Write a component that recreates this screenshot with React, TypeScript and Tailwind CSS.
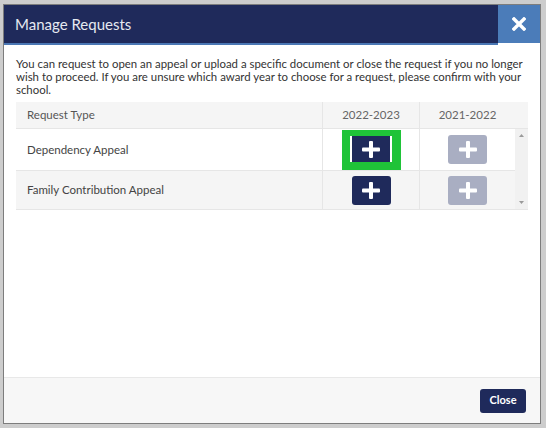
import React from "react";

const Plus = () => (
  <svg width="18" height="17" viewBox="0 0 18 17">
    <rect x="7" y="0" width="4" height="17" rx="1" fill="#fff" />
    <rect x="0" y="6.5" width="18" height="4" rx="1" fill="#fff" />
  </svg>
);

export default function App() {
  return (
    <div
      className="w-[546px] h-[428px] bg-[#cdcdcd] pt-[4px] pl-[3px] pr-[5px] pb-[4px]"
      style={{ fontFamily: "Lato, 'Open Sans', sans-serif" }}
    >
      <div className="h-full border border-[#7d7d7d] bg-white flex flex-col">
        {/* header */}
        <div className="h-[40px] flex">
          <div className="flex-1 bg-[#1f2a5b] border-b-2 border-[#4a77b4] pl-[11px] flex items-center text-[15px] text-[#e6e9f1]">
            Manage Requests
          </div>
          <div className="w-[42px] h-[38px] bg-[#4b7cb9] flex items-center justify-center">
            <svg width="14" height="14" viewBox="0 0 14 14">
              <path d="M2 2 L12 12 M12 2 L2 12" stroke="#fff" strokeWidth="3.4" strokeLinecap="square" />
            </svg>
          </div>
        </div>

        {/* body */}
        <div className="pl-[12px] pr-[10px] pt-[12px]">
          <p className="text-[11.4px] leading-[13px] text-[#333] mr-[-6px]">
            You can request to open an appeal or upload a specific document or close the request if you no longer wish to proceed. If you are unsure which award year to choose for a request, please confirm with your school.
          </p>

          <div className="mt-[6px] w-[512px] grid grid-cols-[307px_97px_95px_13px] text-[11.5px]">
            {/* header row */}
            <div className="h-[27px] bg-[#f5f5f5] border-r border-b border-[#e6e6e6] flex items-center pl-[11px] text-[#555]">
              Request Type
            </div>
            <div className="h-[27px] bg-[#f5f5f5] border-r border-b border-[#e6e6e6] flex items-center justify-center text-[#666]">
              2022-2023
            </div>
            <div className="h-[27px] bg-[#f5f5f5] border-b border-[#e6e6e6] flex items-center justify-center text-[#666]">
              2021-2022
            </div>
            <div className="h-[27px] bg-[#f5f5f5] border-b border-[#e6e6e6]" />

            {/* row 1 */}
            <div className="h-[41px] bg-white border-r border-[#e6e6e6] flex items-center pl-[11px] text-[#444] col-start-1 row-start-2">
              Dependency Appeal
            </div>
            <div className="h-[41px] bg-white border-r border-[#e6e6e6] flex justify-center pt-[1px] col-start-2 row-start-2 relative z-10">
              <div className="w-[59px] h-[40px] bg-[#1fc338] pt-[6px] pl-[8px]">
                <div className="w-[42px] h-[26px] bg-white px-[2px]">
                  <div className="w-[38px] h-[26px] bg-[#1f2a5b] flex items-center justify-center">
                    <Plus />
                  </div>
                </div>
              </div>
            </div>
            <div className="h-[41px] bg-white flex items-center justify-center col-start-3 row-start-2">
              <div className="w-[39px] h-[29px] rounded-[3px] bg-[#a9aec2] flex items-center justify-center">
                <Plus />
              </div>
            </div>

            {/* row 2 */}
            <div className="h-[40px] bg-[#f5f5f5] border-t border-r border-b border-[#e6e6e6] flex items-center pl-[11px] text-[#444] col-start-1 row-start-3">
              Family Contribution Appeal
            </div>
            <div className="h-[40px] bg-[#f5f5f5] border-t border-r border-b border-[#e6e6e6] flex items-center justify-center col-start-2 row-start-3">
              <div className="w-[39px] h-[29px] rounded-[3px] bg-[#1f2a5b] flex items-center justify-center">
                <Plus />
              </div>
            </div>
            <div className="h-[40px] bg-[#f5f5f5] border-t border-b border-[#e6e6e6] flex items-center justify-center col-start-3 row-start-3">
              <div className="w-[39px] h-[29px] rounded-[3px] bg-[#a9aec2] flex items-center justify-center">
                <Plus />
              </div>
            </div>

            {/* scrollbar */}
            <div className="col-start-4 row-start-2 row-span-2 bg-[#f1f1f1] border-b border-[#e6e6e6] flex flex-col items-center justify-between py-[5px]">
              <svg width="5" height="3" viewBox="0 0 5 3">
                <path d="M0 3 L2.5 0 L5 3 Z" fill="#9a9a9a" />
              </svg>
              <svg width="5" height="3" viewBox="0 0 5 3">
                <path d="M0 0 L2.5 3 L5 0 Z" fill="#9a9a9a" />
              </svg>
            </div>
          </div>
        </div>

        {/* footer */}
        <div className="mt-auto h-[46px] bg-[#f7f7f7] border-t border-[#e8e8e8] flex items-center justify-end pr-[14px]">
          <button className="w-[46px] h-[24px] rounded-[3px] bg-[#1f2a5b] text-white text-[11px] font-bold">
            Close
          </button>
        </div>
      </div>
    </div>
  );
}
